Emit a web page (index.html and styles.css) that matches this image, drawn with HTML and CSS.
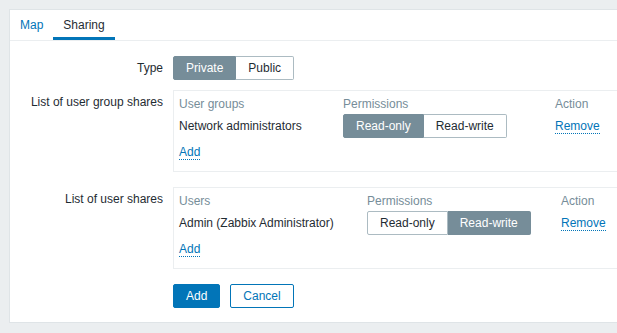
FILE: index.html
```html
<!DOCTYPE html>
<html lang="en">
<head>
    <meta charset="UTF-8">
    <title>Map sharing</title>
    <link rel="stylesheet" href="styles.css">
</head>
<body>
    <div class="panel">
        <!-- Tabs -->
        <ul class="tabs">
            <li class="tab"><a href="#">Map</a></li>
            <li class="tab active"><a href="#">Sharing</a></li>
        </ul>

        <div class="form">
            <!-- Type -->
            <div class="form-row">
                <label class="form-label">Type</label>
                <div class="form-field">
                    <div class="segmented">
                        <span class="seg selected">Private</span>
                        <span class="seg">Public</span>
                    </div>
                </div>
            </div>

            <!-- User group shares -->
            <div class="form-row">
                <label class="form-label">List of user group shares</label>
                <div class="form-field">
                    <div class="share-box">
                        <div class="share-table groups">
                            <div class="th">User groups</div>
                            <div class="th">Permissions</div>
                            <div class="th">Action</div>

                            <div class="td">Network administrators</div>
                            <div class="td">
                                <div class="segmented">
                                    <span class="seg selected">Read-only</span>
                                    <span class="seg">Read-write</span>
                                </div>
                            </div>
                            <div class="td"><a href="#" class="link">Remove</a></div>

                            <div class="add-cell"><a href="#" class="link">Add</a></div>
                        </div>
                    </div>
                </div>
            </div>

            <!-- User shares -->
            <div class="form-row">
                <label class="form-label">List of user shares</label>
                <div class="form-field">
                    <div class="share-box">
                        <div class="share-table users">
                            <div class="th">Users</div>
                            <div class="th">Permissions</div>
                            <div class="th">Action</div>

                            <div class="td">Admin (Zabbix Administrator)</div>
                            <div class="td">
                                <div class="segmented">
                                    <span class="seg">Read-only</span>
                                    <span class="seg selected">Read-write</span>
                                </div>
                            </div>
                            <div class="td"><a href="#" class="link">Remove</a></div>

                            <div class="add-cell"><a href="#" class="link">Add</a></div>
                        </div>
                    </div>
                </div>
            </div>

            <!-- Buttons -->
            <div class="form-row buttons-row">
                <div></div>
                <div class="buttons">
                    <button class="btn btn-primary">Add</button>
                    <button class="btn btn-alt">Cancel</button>
                </div>
            </div>
        </div>
    </div>
</body>
</html>
```

FILE: styles.css
```css
/* Base */
* {
    margin: 0;
    padding: 0;
    box-sizing: border-box;
}

body {
    font-family: 'Liberation Sans', Arial, sans-serif;
    font-size: 12px;
    color: #1f2c33;
    background-color: #ebeef0;
    padding: 9px 0 0 9px;
    overflow: hidden;
    height: 100vh;
}

a {
    text-decoration: none;
}

/* Panel */
.panel {
    width: 680px;
    background-color: #ffffff;
    border: 1px solid #dfe4e7;
    border-right: none;
}

/* Tabs */
.tabs {
    display: flex;
    list-style: none;
    border-bottom: 1px solid #ebeef0;
    height: 31px;
}

.tab a {
    display: block;
    height: 30px;
    padding: 3px 10px 0;
    line-height: 24px;
    border-bottom: 3px solid transparent;
    color: #0275b8;
}

.tab.active a {
    color: #1f2c33;
    border-bottom-color: #0275b8;
}

/* Form */
.form {
    padding: 15px 0 14px;
}

.form-row {
    display: grid;
    grid-template-columns: 153px auto;
    column-gap: 10px;
    margin-bottom: 10px;
}

.form-label {
    text-align: right;
    line-height: 24px;
}

.form-row + .form-row .form-label {
    line-height: 14px;
    padding-top: 5px;
}

.buttons-row {
    margin-bottom: 0;
}

/* Segmented toggle */
.segmented {
    display: inline-flex;
    height: 24px;
}

.seg {
    display: flex;
    align-items: center;
    padding: 0 12px;
    border: 1px solid #acbbc2;
    background-color: #ffffff;
    color: #1f2c33;
}

.seg + .seg {
    border-left: none;
}

.seg:first-child {
    border-radius: 2px 0 0 2px;
}

.seg:last-child {
    border-radius: 0 2px 2px 0;
}

.seg.selected {
    background-color: #768d99;
    border-color: #768d99;
    color: #ffffff;
}

/* Share boxes */
.share-box {
    border: 1px solid #ebeef0;
    padding: 5px;
    width: 470px;
    margin-bottom: 5px;
}

.share-table {
    display: grid;
    align-items: center;
}

.share-table.groups {
    grid-template-columns: 164px 212px auto;
}

.share-table.users {
    grid-template-columns: 188px 194px auto;
}

.th {
    color: #768d99;
    line-height: 16px;
}

.td {
    height: 28px;
    display: flex;
    align-items: center;
}

.add-cell {
    grid-column: 1 / -1;
    padding: 5px 0 7px;
    line-height: 14px;
}

.link {
    color: #0275b8;
    border-bottom: 1px dotted #0275b8;
}

/* Buttons */
.buttons {
    display: flex;
    gap: 10px;
}

.btn {
    height: 24px;
    padding: 0 12px;
    font-family: inherit;
    font-size: 12px;
    border-radius: 2px;
    cursor: pointer;
}

.btn-primary {
    background-color: #0275b8;
    border: 1px solid #0275b8;
    color: #ffffff;
}

.btn-alt {
    background-color: #ffffff;
    border: 1px solid #0275b8;
    color: #0275b8;
}
```
